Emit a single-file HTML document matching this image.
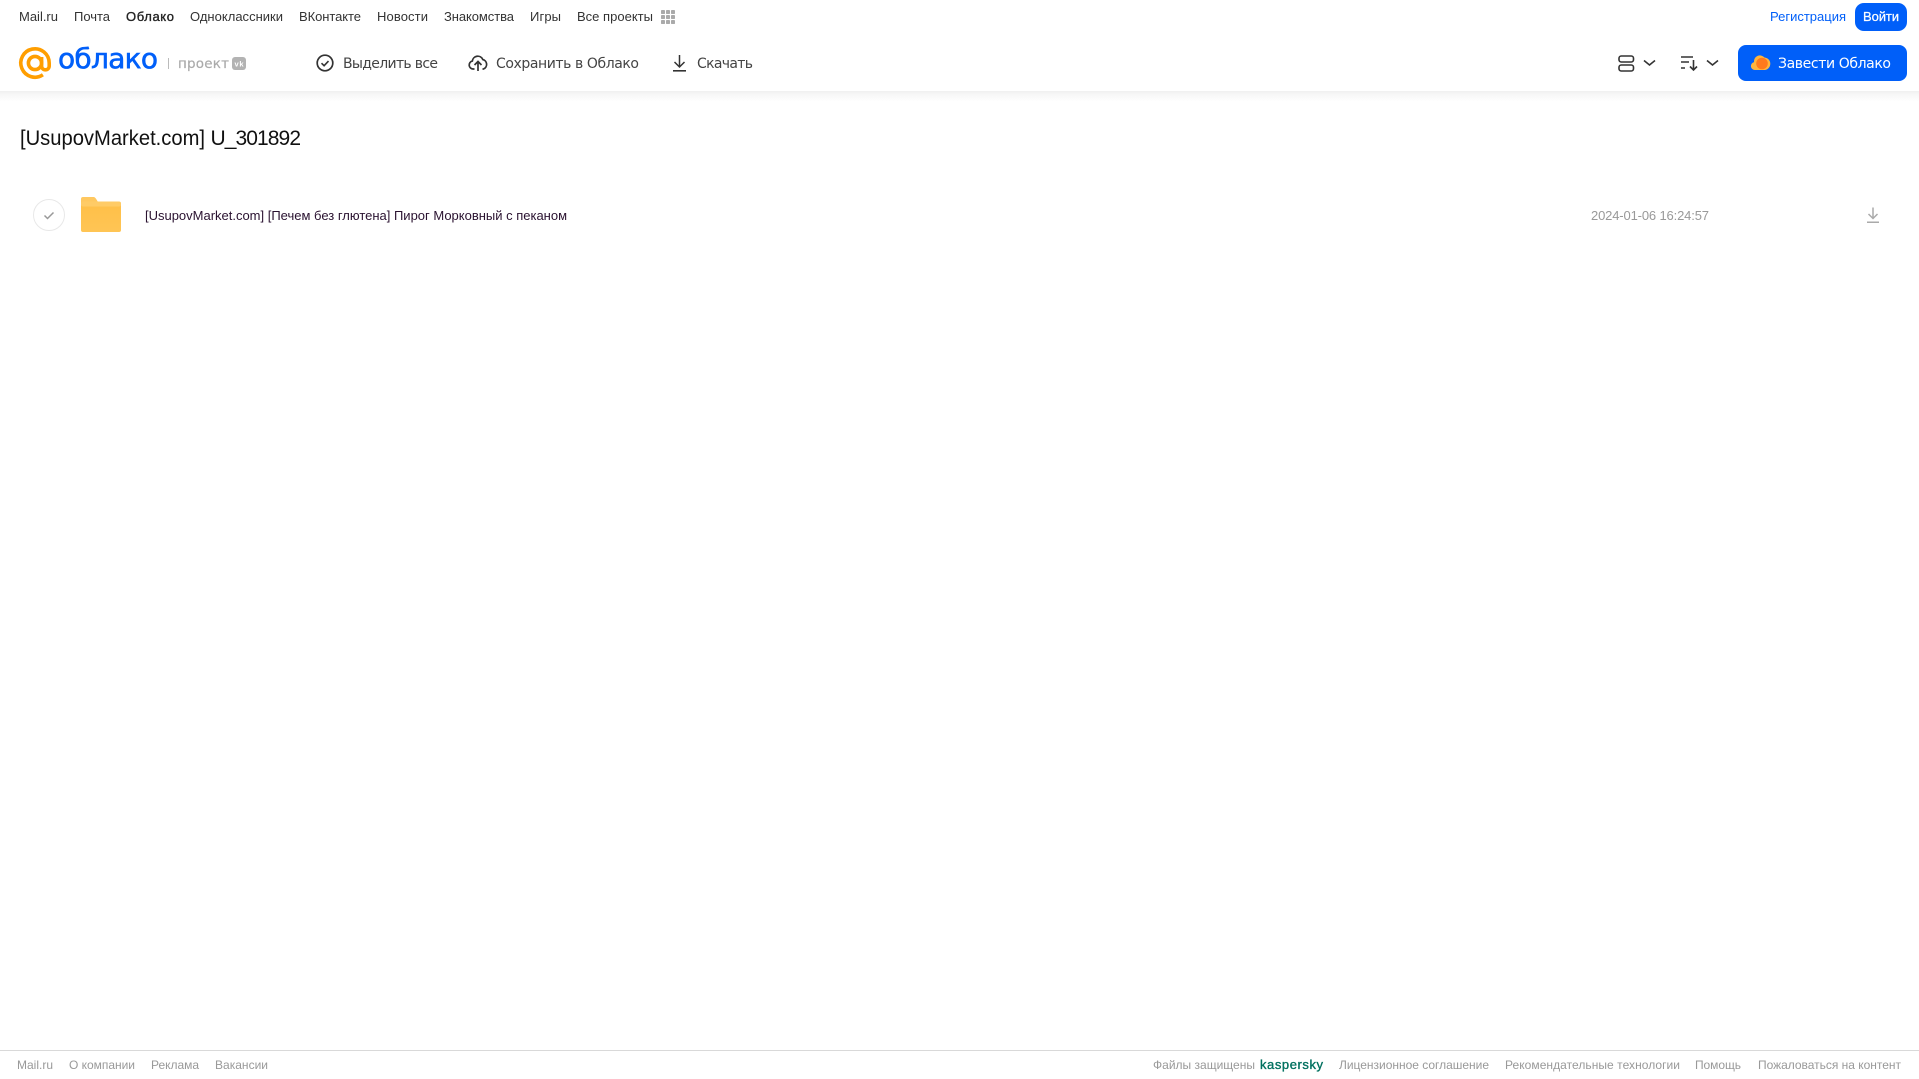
<!DOCTYPE html>
<html lang="ru">
<head>
<meta charset="utf-8">
<title>[UsupovMarket.com] U_301892</title>
<style>
html,body{margin:0;padding:0;background:#fff;width:1919px;height:1079px;overflow:hidden}
svg{display:block;position:absolute;left:0;top:0}
text{white-space:pre}
.n{font:13px "Liberation Sans","Noto Sans CJK SC",sans-serif;fill:#333}
.t{font:14px "DejaVu Sans","Liberation Sans",sans-serif;fill:#444}
.f{font:12px "Liberation Sans",sans-serif;fill:#999}
</style>
</head>
<body>
<svg width="1919" height="1079" viewBox="0 0 1919 1079" xmlns="http://www.w3.org/2000/svg">
<defs>
<linearGradient id="sh" x1="0" y1="0" x2="0" y2="1"><stop offset="0" stop-color="#f0f0f0"/><stop offset=".3" stop-color="#f7f7f7"/><stop offset="1" stop-color="#fff"/></linearGradient>
<linearGradient id="fo" x1="0" y1="0" x2="0" y2="1"><stop offset="0" stop-color="#ffbf47"/><stop offset="1" stop-color="#ffc555"/></linearGradient>
</defs>
<rect x="0" y="91" width="1919" height="11" fill="url(#sh)"/>

<!-- top nav -->
<text class="n" x="19" y="21" textLength="39">Mail.ru</text>
<text class="n" x="74" y="21" textLength="36">Почта</text>
<text class="n" x="126" y="21" textLength="48" style="fill:#222;stroke:#222;stroke-width:.35">Облако</text>
<text class="n" x="190" y="21" textLength="93">Одноклассники</text>
<text class="n" x="299" y="21" textLength="62">ВКонтакте</text>
<text class="n" x="377" y="21" textLength="51">Новости</text>
<text class="n" x="444" y="21" textLength="70">Знакомства</text>
<text class="n" x="530" y="21" textLength="31">Игры</text>
<text class="n" x="577" y="21" textLength="76">Все проекты</text>
<g fill="#aaa">
<rect x="661" y="10" width="4" height="4" rx=".8"/><rect x="666" y="10" width="4" height="4" rx=".8"/><rect x="671" y="10" width="4" height="4" rx=".8"/>
<rect x="661" y="15" width="4" height="4" rx=".8"/><rect x="666" y="15" width="4" height="4" rx=".8"/><rect x="671" y="15" width="4" height="4" rx=".8"/>
<rect x="661" y="20" width="4" height="4" rx=".8"/><rect x="666" y="20" width="4" height="4" rx=".8"/><rect x="671" y="20" width="4" height="4" rx=".8"/>
</g>
<text class="n" x="1770" y="21" textLength="76" style="fill:#005ff9">Регистрация</text>
<rect x="1855" y="3" width="52" height="28" rx="9" fill="#005ff9"/>
<text class="n" x="1863" y="21" textLength="36" style="fill:#fff;stroke:#fff;stroke-width:.25">Войти</text>

<!-- logo -->
<g fill="none" stroke="#ff9e00" stroke-width="3.6">
<circle cx="35" cy="63" r="6.6"/>
<path d="M41.600 57v9a3.800 3.800 0 0 0 7.600 0v-3a14.200 14.200 0 1 0-6.300 11.800"/>
</g>
<text x="58" y="68" textLength="100" style="font:28px 'DejaVu Sans',sans-serif;fill:#005ff9;stroke:#005ff9;stroke-width:.6">облако</text>
<rect x="168" y="58" width="1" height="11" fill="#bbb"/>
<text x="178" y="68" textLength="51" style="font:13.500px 'DejaVu Sans',sans-serif;fill:#aaa;stroke:#aaa;stroke-width:.2">проект</text>
<rect x="232" y="57" width="14" height="13" rx="3" fill="#b3b3b3"/>
<text x="234.500" y="66.500" textLength="9" style="font:700 7.500px 'Liberation Sans',sans-serif;fill:#fff">vk</text>

<!-- toolbar -->
<circle cx="325" cy="63" r="7.800" fill="none" stroke="#333" stroke-width="1.700"/>
<path d="M321.500 63.200l2.600 2.500 4.400-4.600" fill="none" stroke="#333" stroke-width="1.600"/>
<text class="t" x="343" y="68" textLength="95">Выделить все</text>

<path d="M474.500 69h-1.500a4 4 0 0 1-.7-7.900 5.500 5.500 0 0 1 10.500-1.600 5 5 0 0 1 .7 9.500h-1" fill="none" stroke="#333" stroke-width="1.700"/>
<path d="M478 71v-9M474.500 65l3.500-3.500 3.500 3.500" fill="none" stroke="#333" stroke-width="1.700"/>
<text class="t" x="496" y="68" textLength="143">Сохранить в Облако</text>

<path d="M679.500 55v12M674.500 62l5 5 5-5" fill="none" stroke="#333" stroke-width="1.500"/>
<rect x="673" y="70" width="13" height="1.600" fill="#333"/>
<text class="t" x="697" y="68" textLength="56">Скачать</text>

<!-- right controls -->
<g fill="none" stroke="#333" stroke-width="1.600">
<rect x="1619" y="56" width="14.500" height="6" rx="2.200"/>
<rect x="1619" y="65" width="14.500" height="6" rx="2.200"/>
<path d="M1644 60.500l5.500 4.500 5.500-4.500"/>
<path d="M1681 57h12M1681 62h8M1681 68h4"/>
<path d="M1693.500 60v9.500M1690 66.500l3.500 3.500 3.500-3.500"/>
<path d="M1707 60.500l5.500 4.500 5.500-4.500"/>
</g>
<rect x="1738" y="45" width="169" height="36" rx="8" fill="#005ff9"/>
<path d="M1755 70a4 4 0 0 1-1-7.900 6 6 0 0 1 10.500-4.600 6.300 6.300 0 0 1 .5 12.500z" fill="#ffb53d"/>
<circle cx="1762" cy="63.500" r="5.800" fill="#ff7a1c"/>
<text class="t" x="1778" y="68" textLength="113" style="fill:#fff">Завести Облако</text>

<!-- title -->
<text x="20" y="145" textLength="185" lengthAdjust="spacingAndGlyphs" style="font:21px 'Liberation Sans',sans-serif;fill:#111">[UsupovMarket.com]</text>
<text x="210.500" y="145" textLength="90.500" lengthAdjust="spacing" style="font:21px 'Liberation Sans',sans-serif;fill:#111">U_301892</text>

<!-- row -->
<circle cx="49" cy="215" r="15.500" fill="#fff" stroke="#e8e8e8" stroke-width="1"/>
<path d="M44.500 215.500l3 3 6-6" fill="none" stroke="#999" stroke-width="1.500"/>
<path d="M83 197h10c2 0 2.500 1 3.500 2.500l1.500 2.500h21a2 2 0 0 1 2 2v2H81v-7a2 2 0 0 1 2-2z" fill="#ffc860"/>
<rect x="81" y="202" width="40" height="30" rx="2" fill="url(#fo)"/>
<rect x="81" y="201.500" width="40" height="5" rx="2" fill="#ffcb66"/>
<text x="145" y="220" textLength="422" style="font:13px 'Liberation Sans',sans-serif;fill:#2a1230">[UsupovMarket.com] [Печем без глютена] Пирог Морковный с пеканом</text>
<text x="1591" y="220" textLength="118" style="font:13px 'Liberation Sans',sans-serif;fill:#999">2024-01-06 16:24:57</text>
<path d="M1873 207.500v11M1868.500 214l4.500 4.500 4.500-4.500" fill="none" stroke="#aaa" stroke-width="1.500"/>
<rect x="1867" y="221.500" width="12" height="1.500" fill="#aaa"/>

<!-- footer -->
<rect x="0" y="1050" width="1919" height="1" fill="#d9d9d9"/>
<text class="f" x="17" y="1069" textLength="36">Mail.ru</text>
<text class="f" x="69" y="1069" textLength="66">О компании</text>
<text class="f" x="151" y="1069" textLength="48">Реклама</text>
<text class="f" x="215" y="1069" textLength="53">Вакансии</text>
<text class="f" x="1153" y="1069" textLength="102">Файлы защищены</text>
<text class="f" x="1260" y="1069" textLength="63" style="font:13px 'Liberation Sans',sans-serif;fill:#00705f;stroke:#00705f;stroke-width:.35">kaspersky</text>
<text class="f" x="1339" y="1069" textLength="150">Лицензионное соглашение</text>
<text class="f" x="1505" y="1069" textLength="175">Рекомендательные технологии</text>
<text class="f" x="1695" y="1069" textLength="46">Помощь</text>
<text class="f" x="1758" y="1069" textLength="143">Пожаловаться на контент</text>
</svg>
</body>
</html>
